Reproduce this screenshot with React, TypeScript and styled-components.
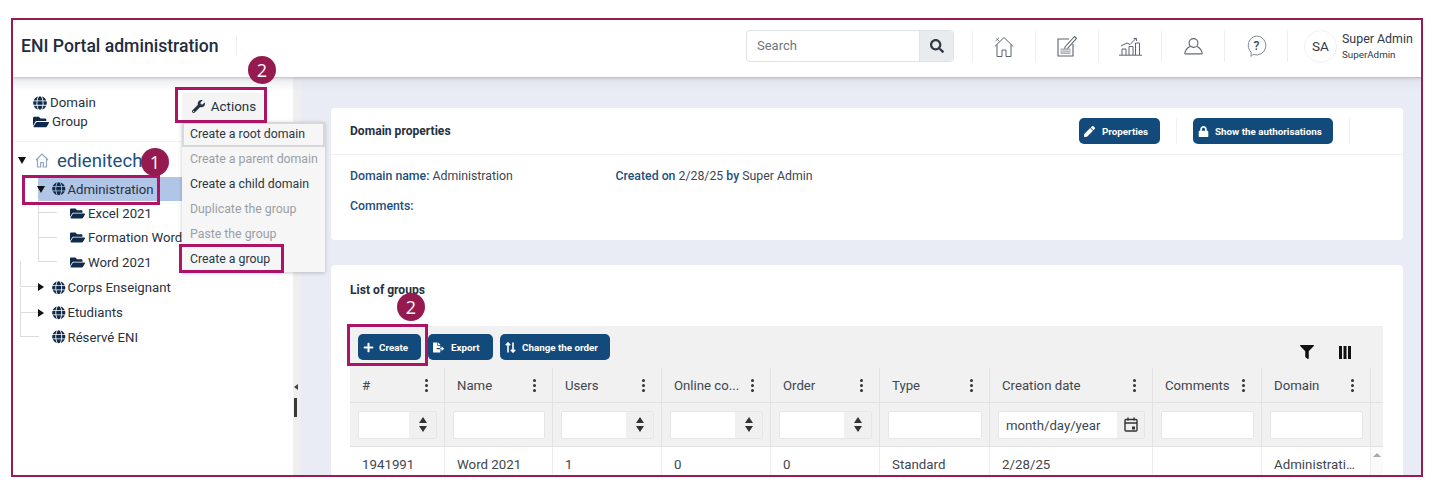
import React from "react";
import styled, { createGlobalStyle } from "styled-components";
import { FaGlobe, FaFolderOpen, FaWrench, FaPen, FaLock, FaPlus, FaFileExport, FaFilter, FaSearch } from "react-icons/fa";

const Global = createGlobalStyle`
  html, body { margin: 0; padding: 0; background: #fff; }
  body { font-family: Roboto, "Liberation Sans", sans-serif; color: #27323f; }
  * { box-sizing: border-box; }
`;

const Page = styled.div`
  width: 1440px;
  height: 502px;
  padding: 18px 17px 0 11px;
  background: #fff;
  overflow: hidden;
`;
const Frame = styled.div`
  position: relative;
  width: 1412px;
  height: 459px;
  border: 2px solid #981b52;
  overflow: hidden;
  display: flex;
  flex-direction: column;
  background: #e9ecf5;
`;
const Header = styled.header`
  height: 57px;
  flex: none;
  background: #fff;
  display: flex;
  align-items: center;
  padding: 0 8px 5px 8px;
  box-shadow: 0 1px 3px rgba(40, 50, 70, 0.25);
  position: relative;
  z-index: 2;
`;
const Title = styled.h1`
  margin: 0;
  font: 500 17.6px/20px Roboto, sans-serif;
  color: #1f2d3f;
  width: 216px;
  height: 20px;
  white-space: nowrap;
  border-right: 1px solid #eceef2;
`;
const SearchBox = styled.div`
  margin-left: auto;
  margin-right: 18px;
  display: flex;
  width: 208px;
  height: 32px;
  border: 1px solid #dfe2e6;
  border-radius: 4px;
  overflow: hidden;
`;
const SearchInput = styled.div`
  flex: 1;
  font-size: 13px;
  line-height: 30px;
  padding-left: 10px;
  color: #6f7780;
`;
const SearchBtn = styled.div`
  width: 34px;
  background: #e9ecef;
  display: flex;
  align-items: center;
  justify-content: center;
  color: #2f3a46;
  font-size: 14px;
  border-left: 1px solid #dfe2e6;
`;
const NavSlot = styled.div`
  width: 63px;
  height: 32px;
  display: flex;
  align-items: center;
  justify-content: center;
  border-left: 1px solid #eceef2;
  color: #5b6570;
`;
const UserSlot = styled.div`
  display: flex;
  align-items: center;
  height: 32px;
  width: 126px;
  padding-left: 16px;
  border-left: 1px solid #eceef2;
`;
const Avatar = styled.div`
  flex: none;
  width: 33px;
  height: 33px;
  border-radius: 50%;
  border: 1px solid #f0f1f4;
  font-size: 13.5px;
  line-height: 31px;
  text-align: center;
  color: #2f3a46;
`;
const UserText = styled.div`
  margin-left: 5px;
  white-space: nowrap;
`;
const UserName = styled.div`
  font-size: 12.4px;
  line-height: 16px;
  color: #2f3a46;
`;
const UserLogin = styled.div`
  font-size: 9.8px;
  line-height: 15px;
  color: #2f3a46;
`;
const Body = styled.div`
  flex: 1;
  display: flex;
  min-height: 0;
`;
const Sidebar = styled.aside`
  width: 280px;
  flex: none;
  background: linear-gradient(#e9eaee 0, #fff 14px);
  padding: 16px 0 0 0;
  position: relative;
`;
const LegendRow = styled.div`
  display: flex;
  align-items: flex-start;
  justify-content: space-between;
  height: 49px;
  padding-left: 20px;
  border-bottom: 1px solid #f0f1f3;
  margin-right: 1px;
`;
const Legend = styled.div`
  font-size: 13.3px;
  line-height: 19px;
  color: #27323f;
`;
const LegendItem = styled.div`
  display: flex;
  align-items: center;
  gap: 3px;
  svg { color: #0f2a4a; font-size: 14px; }
`;
const FolderLegendItem = styled(LegendItem)`
  svg { font-size: 16px; }
`;
const ActionsArea = styled.div`
  position: absolute;
  left: 169px;
  top: 16px;
  z-index: 3;
`;
const ActionsBtn = styled.div`
  width: 81px;
  height: 27px;
  background: #f4f4f4;
  border-radius: 3px;
  display: flex;
  align-items: center;
  justify-content: center;
  gap: 6px;
  padding-left: 3px;
  font-size: 13.4px;
  color: #27323f;
  svg { font-size: 13px; }
`;
const Menu = styled.div`
  position: absolute;
  top: 29px;
  left: 0;
  width: 143px;
  background: #f6f6f6;
  box-shadow: 0 1px 4px rgba(0, 0, 0, 0.22);
`;
const MenuItem = styled.div<{ $off?: boolean; $focus?: boolean }>`
  height: 25px;
  font-size: 12.3px;
  line-height: ${(p) => (p.$focus ? "21px" : "25px")};
  padding-left: ${(p) => (p.$focus ? "6px" : "8px")};
  white-space: nowrap;
  color: ${(p) => (p.$off ? "#9a9ea4" : "#2b3644")};
  border: ${(p) => (p.$focus ? "2px solid #d8d8d8" : "none")};
`;
const Tree = styled.div`
  padding-top: 2px;
`;
const TreeRow = styled.div<{ $h?: number; $indent: number }>`
  position: relative;
  height: ${(p) => p.$h ?? 24.5}px;
  display: flex;
  align-items: center;
  padding-left: ${(p) => p.$indent}px;
  font-size: 13.2px;
  color: #27323f;
  white-space: nowrap;
`;
const SelBar = styled.div`
  position: absolute;
  left: 25px;
  right: 110px;
  top: 0;
  bottom: 0;
  background: #b1c6e6;
`;
const RowContent = styled.div`
  position: relative;
  display: flex;
  align-items: center;
`;
const Toggle = styled.span<{ $open?: boolean }>`
  display: block;
  width: 0;
  height: 0;
  margin-right: ${(p) => (p.$open ? 7 : 8)}px;
  ${(p) =>
    p.$open
      ? "border-left: 4px solid transparent; border-right: 4px solid transparent; border-top: 7px solid #111;"
      : "border-top: 4px solid transparent; border-bottom: 4px solid transparent; border-left: 6px solid #111;"}
`;
const RootIcon = styled.span`
  display: inline-flex;
  margin-left: 2px;
`;
const Glyph = styled.span`
  display: inline-flex;
  margin-right: 2px;
  color: #0f2a4a;
  font-size: 13.5px;
`;
const FolderGlyph = styled(Glyph)`
  margin-right: 3px;
  font-size: 15px;
`;
const RootName = styled.span`
  font-size: 18.6px;
  color: #22507f;
  margin-left: 8px;
`;
const Elbow = styled.div<{ $left: number; $up: number }>`
  position: absolute;
  left: ${(p) => p.$left}px;
  bottom: 50%;
  width: 19px;
  height: ${(p) => p.$up}px;
  border-left: 1px solid #dcdcdc;
  border-bottom: 1px solid #dcdcdc;
`;
const Handle = styled.div`
  width: 8px;
  flex: none;
  position: relative;
  background: linear-gradient(#dfe2ea 0, #efefef 14px);
`;
const HandleArrow = styled.div`
  position: absolute;
  left: 1px;
  top: 307px;
  width: 0;
  height: 0;
  border-top: 3px solid transparent;
  border-bottom: 3px solid transparent;
  border-right: 4px solid #444;
`;
const HandleBar = styled.div`
  position: absolute;
  left: 1px;
  top: 321px;
  width: 3px;
  height: 19px;
  background: #3a3a3a;
`;
const Main = styled.main`
  flex: 1;
  min-width: 0;
  padding: 31px 18px 0 30px;
  background: linear-gradient(#dfe2ea 0, #e9ecf5 14px);
  display: flex;
  flex-direction: column;
  gap: 25px;
`;
const Card = styled.section`
  background: #fff;
  border-radius: 4px;
  flex: none;
`;
const PropsCard = styled(Card)`
  height: 132px;
`;
const PropsHead = styled.div`
  height: 47px;
  padding: 0 0 0 19px;
  display: flex;
  align-items: center;
  border-bottom: 1px solid #eef0f5;
`;
const CardTitle = styled.h2`
  margin: 0;
  font-size: 12.1px;
  font-weight: 700;
  color: #26313e;
`;
const HeadActions = styled.div`
  margin-left: auto;
  display: flex;
  align-items: center;
  padding-right: 53px;
`;
const ActionCell = styled.div`
  display: flex;
  height: 26px;
  align-items: center;
  padding-right: 16px;
  margin-right: 16px;
  border-right: 1px solid #eef0f5;
  &:last-child { margin-right: 0; }
`;
const DarkBtn = styled.div<{ $w: number; $gap?: number }>`
  width: ${(p) => p.$w}px;
  height: 26px;
  border-radius: 5px;
  background: #134a7c;
  color: #fff;
  font-size: 9.8px;
  font-weight: 700;
  white-space: nowrap;
  display: flex;
  align-items: center;
  padding-left: 5px;
  gap: ${(p) => p.$gap ?? 7}px;
  svg { font-size: 11px; flex: none; }
`;
const PropsBody = styled.div`
  padding: 13px 19px;
  font-size: 12.3px;
  line-height: 16px;
  color: #3b4652;
`;
const InfoRow = styled.div`
  display: flex;
  margin-bottom: 14px;
`;
const InfoCol = styled.div`
  width: 265.5px;
`;
const Label = styled.span`
  color: #1d4f80;
  font-weight: 500;
`;
const GroupsCard = styled(Card)`
  flex: 1;
  padding: 16px 19px 0;
  border-radius: 4px 4px 0 0;
`;
const GroupsTitle = styled(CardTitle)`
  line-height: 18px;
`;
const TableWrap = styled.div`
  margin-top: 27px;
  margin-right: 1px;
  background: #f1f1f1;
`;
const Toolbar = styled.div`
  height: 42px;
  display: flex;
  align-items: flex-start;
  padding: 8px 0 0 8px;
  gap: 7px;
  position: relative;
`;
const ToolIcons = styled.div`
  position: absolute;
  right: 32px;
  top: 19px;
  display: flex;
  gap: 25px;
  color: #111;
  font-size: 14px;
  align-items: center;
`;
const GridRow = styled.div<{ $h: number; $bg?: string }>`
  display: grid;
  grid-template-columns: 95px 108px 109px 109px 109px 110px 163px 109px 109px 12px;
  height: ${(p) => p.$h}px;
  background: ${(p) => p.$bg ?? "transparent"};
  border-bottom: 1px solid #e2e2e2;
`;
const HeadCell = styled.div`
  display: flex;
  align-items: center;
  justify-content: space-between;
  padding: 0 16px 0 12px;
  font-size: 13.2px;
  color: #3d4650;
  border-right: 1px solid #e2e2e2;
  white-space: nowrap;
`;
const Dots = styled.span`
  display: inline-flex;
  flex-direction: column;
  gap: 2px;
  i {
    display: block;
    width: 3px;
    height: 3px;
    border-radius: 50%;
    background: #333;
  }
`;
const FilterCell = styled.div`
  display: flex;
  align-items: center;
  justify-content: center;
  border-right: 1px solid #e2e2e2;
  padding: 0 7px 0 8px;
`;
const FilterInput = styled.div`
  flex: 1;
  height: 28px;
  background: #fff;
  border: 1px solid #e6e6e6;
  border-radius: 2px;
  display: flex;
  justify-content: flex-end;
  font-size: 13.2px;
  line-height: 27px;
  color: #3d4650;
  overflow: hidden;
`;
const DateText = styled.span`
  flex: 1;
  padding-left: 7px;
`;
const Spin = styled.div`
  width: 27px;
  background: #f0f0f0;
  display: flex;
  flex-direction: column;
  align-items: center;
  justify-content: center;
  gap: 3px;
`;
const Tri = styled.i<{ $down?: boolean }>`
  display: block;
  width: 0;
  height: 0;
  border-left: 4px solid transparent;
  border-right: 4px solid transparent;
  ${(p) => (p.$down ? "border-top: 6px solid #333;" : "border-bottom: 6px solid #333;")}
`;
const Cell = styled.div`
  padding: 9px 12px 0;
  font-size: 13.3px;
  line-height: 18px;
  color: #3d4650;
  border-right: 1px solid #ececec;
  white-space: nowrap;
  overflow: hidden;
  text-overflow: ellipsis;
`;
const ScrollCell = styled.div`
  background: #fafafa;
  display: flex;
  justify-content: center;
  padding-top: 6px;
`;
const ScrollUp = styled.i`
  display: block;
  width: 0;
  height: 0;
  border-left: 4px solid transparent;
  border-right: 4px solid transparent;
  border-bottom: 4px solid #a8a8a8;
`;
const Box = styled.div<{ $x: number; $y: number; $w: number; $h: number }>`
  position: absolute;
  left: ${(p) => p.$x - 13}px;
  top: ${(p) => p.$y - 20}px;
  width: ${(p) => p.$w}px;
  height: ${(p) => p.$h}px;
  border: 3px solid #ae1465;
  z-index: 5;
  pointer-events: none;
`;
const Badge = styled.div<{ $x: number; $y: number }>`
  position: absolute;
  left: ${(p) => p.$x - 14 - 13}px;
  top: ${(p) => p.$y - 14 - 20}px;
  width: 28px;
  height: 28px;
  border-radius: 50%;
  background: #951a50;
  color: #fff;
  font: 500 18px/28px "Open Sans", Roboto, sans-serif;
  text-align: center;
  z-index: 6;
`;

const HomeIcon = () => (
  <svg width="20" height="21" viewBox="0 0 20 21" fill="none" stroke="currentColor" strokeWidth="1">
    <path d="M.8 10.5 10 1.5l9.2 9M3 8.5v12h5v-6.5h4v6.5h5v-12" />
    <path d="M1.5 5 5 1.8M2.5 2.5l3 3" strokeWidth=".8" />
  </svg>
);
const NoteIcon = () => (
  <svg width="21" height="22" viewBox="0 0 21 22" fill="none" stroke="currentColor" strokeWidth="1.1">
    <path d="M12 4H1v17h15V9" />
    <path d="M8 12 17.5 1.5l2 1.8L10 14l-2.5.8z" />
    <rect x="3.5" y="13.5" width="10" height="5.5" fill="#a9aeb4" stroke="none" />
    <path d="M3.5 15.3h10M3.5 17.2h10" stroke="#fff" strokeWidth=".6" />
  </svg>
);
const ChartIcon = () => (
  <svg width="23" height="19" viewBox="0 0 23 19" fill="none" stroke="currentColor" strokeWidth="1">
    <path d="M0 18.2h23M3 18v-6h4v6M10 18v-8.5h4V18M16.5 18V6h4v12" />
    <path d="M2 9 8 6l3 1.5 6-6M14.5 1.5H17.5V4" />
  </svg>
);
const UserIcon = () => (
  <svg width="19" height="17" viewBox="0 0 19 17" fill="none" stroke="currentColor" strokeWidth="1.1">
    <circle cx="9.5" cy="5" r="4.4" />
    <path d="M6 8.5C3 10 1.2 12.5.8 15.5h17.4C17.8 12.5 16 10 13 8.5" />
    <path d="M.8 16h17.4" stroke="#9a9fa5" strokeWidth="1.6" />
  </svg>
);
const HelpIcon = () => (
  <svg width="21" height="22" viewBox="0 0 21 22" fill="none" stroke="#7f8a97" strokeWidth="1">
    <path d="M10.5 1a9.5 9.5 0 1 1-3.4 18.4L5 21.5l.2-4.3A9.5 9.5 0 0 1 10.5 1z" />
    <text x="10.5" y="14.5" fontSize="12" fontWeight="500" fontFamily="Roboto" fill="#3a4654" stroke="none" textAnchor="middle">?</text>
  </svg>
);
const RootHome = () => (
  <svg width="14" height="15" viewBox="0 0 14 15" fill="none" stroke="#8fa6bf" strokeWidth="1.2">
    <path d="M1 7 7 1l6 6M2.5 6v8h3.2V9.5h2.6V14h3.2V6" />
  </svg>
);
const ColsIcon = () => (
  <svg width="12" height="13" viewBox="0 0 12 13" fill="#111">
    <rect x="0" y="0" width="3" height="13" />
    <rect x="4.5" y="0" width="3" height="13" />
    <rect x="9" y="0" width="3" height="13" />
  </svg>
);
const SortIcon = () => (
  <svg width="11" height="11" viewBox="0 0 11 11" fill="none" stroke="#fff" strokeWidth="1.6">
    <path d="M3 10.5V1M.8 3.2 3 1l2.2 2.2M8 .5V10M5.8 7.8 8 10l2.2-2.2" />
  </svg>
);
const CalIcon = () => (
  <svg width="14" height="15" viewBox="0 0 14 15" fill="none" stroke="#333" strokeWidth="1.4">
    <rect x="1" y="2.5" width="12" height="11.5" rx="1" />
    <path d="M1 6h12M4 .5v3M10 .5v3" />
    <rect x="8" y="9.5" width="3" height="3" fill="#333" stroke="none" />
  </svg>
);

const columns = ["#", "Name", "Users", "Online co...", "Order", "Type", "Creation date", "Comments", "Domain"];
const filters: ("num" | "text" | "date")[] = ["num", "text", "num", "num", "num", "text", "date", "text", "text"];
const row = ["1941991", "Word 2021", "1", "0", "0", "Standard", "2/28/25", "", "Administration"];
const menu = [
  { t: "Create a root domain", focus: true },
  { t: "Create a parent domain", off: true },
  { t: "Create a child domain" },
  { t: "Duplicate the group", off: true },
  { t: "Paste the group", off: true },
  { t: "Create a group" },
];

export default function App() {
  return (
    <>
      <Global />
      <Page>
        <Frame>
          <Header>
            <Title>ENI Portal administration</Title>
            <SearchBox>
              <SearchInput>Search</SearchInput>
              <SearchBtn><FaSearch /></SearchBtn>
            </SearchBox>
            <NavSlot><HomeIcon /></NavSlot>
            <NavSlot><NoteIcon /></NavSlot>
            <NavSlot><ChartIcon /></NavSlot>
            <NavSlot><UserIcon /></NavSlot>
            <NavSlot><HelpIcon /></NavSlot>
            <UserSlot>
              <Avatar>SA</Avatar>
              <UserText>
                <UserName>Super Admin</UserName>
                <UserLogin>SuperAdmin</UserLogin>
              </UserText>
            </UserSlot>
          </Header>
          <Body>
            <Sidebar>
              <LegendRow>
                <Legend>
                  <LegendItem><FaGlobe />Domain</LegendItem>
                  <FolderLegendItem><FaFolderOpen />Group</FolderLegendItem>
                </Legend>
              </LegendRow>
              <ActionsArea>
                <ActionsBtn><FaWrench />Actions</ActionsBtn>
                <Menu>
                  {menu.map((m) => (
                    <MenuItem key={m.t} $off={m.off} $focus={m.focus}>{m.t}</MenuItem>
                  ))}
                </Menu>
              </ActionsArea>
              <Tree>
                <TreeRow $indent={5} $h={33}>
                  <RowContent>
                    <Toggle $open /><RootIcon><RootHome /></RootIcon><RootName>edienitech</RootName>
                  </RowContent>
                </TreeRow>
                <TreeRow $indent={24} $h={24}>
                  <SelBar />
                  <RowContent>
                    <Toggle $open /><Glyph><FaGlobe /></Glyph>Administration
                  </RowContent>
                </TreeRow>
                <TreeRow $indent={57}>
                  <Elbow $left={25} $up={14} />
                  <RowContent><FolderGlyph><FaFolderOpen /></FolderGlyph>Excel 2021</RowContent>
                </TreeRow>
                <TreeRow $indent={57}>
                  <Elbow $left={25} $up={25} />
                  <RowContent><FolderGlyph><FaFolderOpen /></FolderGlyph>Formation Word</RowContent>
                </TreeRow>
                <TreeRow $indent={57} $h={24}>
                  <Elbow $left={25} $up={25} />
                  <RowContent><FolderGlyph><FaFolderOpen /></FolderGlyph>Word 2021</RowContent>
                </TreeRow>
                <TreeRow $indent={25} $h={26.5}>
                  <Elbow $left={7} $up={26} />
                  <RowContent><Toggle /><Glyph><FaGlobe /></Glyph>Corps Enseignant</RowContent>
                </TreeRow>
                <TreeRow $indent={25}>
                  <Elbow $left={7} $up={25} />
                  <RowContent><Toggle /><Glyph><FaGlobe /></Glyph>Etudiants</RowContent>
                </TreeRow>
                <TreeRow $indent={39} $h={24}>
                  <Elbow $left={7} $up={25} />
                  <RowContent><Glyph><FaGlobe /></Glyph>Réservé ENI</RowContent>
                </TreeRow>
              </Tree>
            </Sidebar>
            <Handle>
              <HandleArrow />
              <HandleBar />
            </Handle>
            <Main>
              <PropsCard>
                <PropsHead>
                  <CardTitle>Domain properties</CardTitle>
                  <HeadActions>
                    <ActionCell>
                      <DarkBtn $w={81} $gap={7}><FaPen />Properties</DarkBtn>
                    </ActionCell>
                    <ActionCell>
                      <DarkBtn $w={140} $gap={6}><FaLock />Show the authorisations</DarkBtn>
                    </ActionCell>
                  </HeadActions>
                </PropsHead>
                <PropsBody>
                  <InfoRow>
                    <InfoCol><Label>Domain name:</Label> Administration</InfoCol>
                    <div><Label>Created on</Label> 2/28/25 <Label>by</Label> Super Admin</div>
                  </InfoRow>
                  <InfoRow><Label>Comments:</Label></InfoRow>
                </PropsBody>
              </PropsCard>
              <GroupsCard>
                <GroupsTitle>List of groups</GroupsTitle>
                <TableWrap>
                  <Toolbar>
                    <DarkBtn $w={63} $gap={5}><FaPlus />Create</DarkBtn>
                    <DarkBtn $w={65} $gap={7}><FaFileExport />Export</DarkBtn>
                    <DarkBtn $w={110} $gap={6}><SortIcon />Change the order</DarkBtn>
                    <ToolIcons><FaFilter /><ColsIcon /></ToolIcons>
                  </Toolbar>
                  <GridRow $h={35}>
                    {columns.map((c) => (
                      <HeadCell key={c}>{c}<Dots><i /><i /><i /></Dots></HeadCell>
                    ))}
                  </GridRow>
                  <GridRow $h={44}>
                    {filters.map((f, i) => (
                      <FilterCell key={i}>
                        <FilterInput>
                          {f === "date" && <DateText>month/day/year</DateText>}
                          {f === "num" && <Spin><Tri /><Tri $down /></Spin>}
                          {f === "date" && <Spin><CalIcon /></Spin>}
                        </FilterInput>
                      </FilterCell>
                    ))}
                  </GridRow>
                  <GridRow $h={40} $bg="#fff">
                    {row.map((c, i) => <Cell key={i}>{c}</Cell>)}
                    <ScrollCell><ScrollUp /></ScrollCell>
                  </GridRow>
                </TableWrap>
              </GroupsCard>
            </Main>
          </Body>
          <Box $x={175} $y={87} $w={92} $h={36} />
          <Box $x={22} $y={175} $w={138} $h={30} />
          <Box $x={179} $y={244} $w={105} $h={29} />
          <Box $x={347} $y={324} $w={81} $h={42} />
          <Badge $x={262} $y={70}>2</Badge>
          <Badge $x={155} $y={162}>1</Badge>
          <Badge $x={411} $y={307}>2</Badge>
        </Frame>
      </Page>
    </>
  );
}
